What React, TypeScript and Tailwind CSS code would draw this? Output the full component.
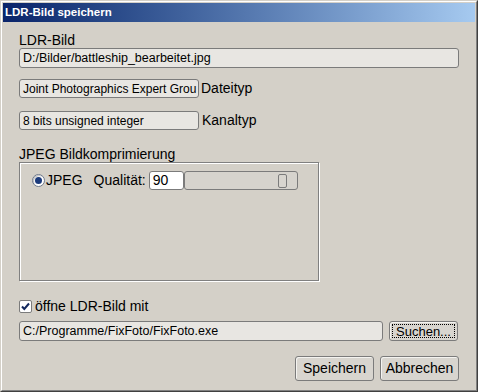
export default function App() {
  const field =
    "rounded-[3px] border border-[#7b7b7b] bg-[#e8e6e2] text-[12.5px] leading-[18px] pl-[3px] whitespace-nowrap overflow-hidden";
  const btn =
    "rounded-[3px] border border-[#7b7b7b] bg-[#d8d5cf] shadow-[inset_1px_1px_0_#f4f3f0] flex items-center justify-center text-[14px]";
  return (
    <div className="w-[478px] h-[392px] bg-[#d4d0c8] border border-t-[#d4d0c8] border-l-[#d4d0c8] border-r-[#404040] border-b-[#404040] font-['Liberation_Sans',Arial,sans-serif] text-black">
      <div className="h-full border border-t-white border-l-white border-r-[#808080] border-b-[#808080] p-px flex flex-col">
        <div className="h-[19px] bg-gradient-to-r from-[#0a246a] to-[#a6caf0] text-white font-bold text-[11.5px] leading-[19px] pl-[2px]">
          LDR-Bild speichern
        </div>
        <div className="flex-1 pl-[16px] pt-[10px] flex flex-col">
          <div className="h-[16px] text-[14px] leading-[16px]">LDR-Bild</div>
          <div className={`${field} h-[20px] w-[440px]`}>D:/Bilder/battleship_bearbeitet.jpg</div>

          <div className="mt-[10px] flex items-center gap-[2px]">
            <div className={`${field} h-[19px] w-[180px] leading-[17px] text-[12px]`}>Joint Photographics Expert Grou</div>
            <span className="text-[14px]">Dateityp</span>
          </div>
          <div className="mt-[11px] flex items-center gap-[3px]">
            <div className={`${field} h-[19px] w-[180px] leading-[17px] text-[12px]`}>8 bits unsigned integer</div>
            <span className="text-[14px]">Kanaltyp</span>
          </div>

          <div className="mt-[15px] h-[16px] text-[14px] leading-[16px]">JPEG Bildkomprimierung</div>
          <div className="h-[119px] w-[300px] border border-[#808080] shadow-[1px_1px_0_#ffffff,inset_1px_1px_0_#ffffff] pt-[8px] pl-[12px]">
            <div className="flex items-center h-[19px] text-[14px]">
              <div className="w-[13px] h-[13px] rounded-full border border-[#6f7a8c] bg-white flex items-center justify-center shadow-[inset_1px_1px_1px_#c0c0c0]">
                <div className="w-[7px] h-[7px] rounded-full bg-[#1c3b7c]" />
              </div>
              <span className="ml-px">JPEG</span>
              <span className="ml-[11px]">Qualität:</span>
              <div className="ml-[3px] w-[35px] h-[19px] rounded-[3px] border border-[#7b7b7b] bg-white text-[14px] leading-[17px] pl-[3px]">
                90
              </div>
              <div className="w-[114px] h-[19px] rounded-[3px] border border-[#7b7b7b] bg-[#d6d3cd] relative">
                <div className="absolute left-[93px] top-[2px] w-[9px] h-[14px] rounded-[2px] border border-[#7b7b7b] bg-[#d8d5cf]" />
              </div>
            </div>
          </div>

          <div className="mt-[17px] flex items-center h-[16px] text-[14px]">
            <div className="w-[13px] h-[13px] rounded-[2px] border border-[#7b7b7b] bg-white flex items-center justify-center">
              <svg width="11" height="11" viewBox="0 0 11 11">
                <path d="M2 5.5 L4.3 8 L9 2.5" stroke="#13285e" strokeWidth="2" fill="none" />
              </svg>
            </div>
            <span className="ml-[3px]">öffne LDR-Bild mit</span>
          </div>

          <div className="mt-[7px] flex items-center gap-[6px]">
            <div className={`${field} h-[20px] w-[364px]`}>C:/Programme/FixFoto/FixFoto.exe</div>
            <div className={`${btn} w-[69px] h-[20px] p-[2px]`}>
              <div className="w-full h-full border border-dotted border-black flex items-center justify-center text-[13px] leading-none">
                Suchen...
              </div>
            </div>
          </div>

          <div className="mt-[15px] w-[440px] flex justify-end gap-[6px]">
            <div className={`${btn} w-[79px] h-[25px]`}>Speichern</div>
            <div className={`${btn} w-[79px] h-[25px]`}>Abbrechen</div>
          </div>
        </div>
      </div>
    </div>
  );
}
